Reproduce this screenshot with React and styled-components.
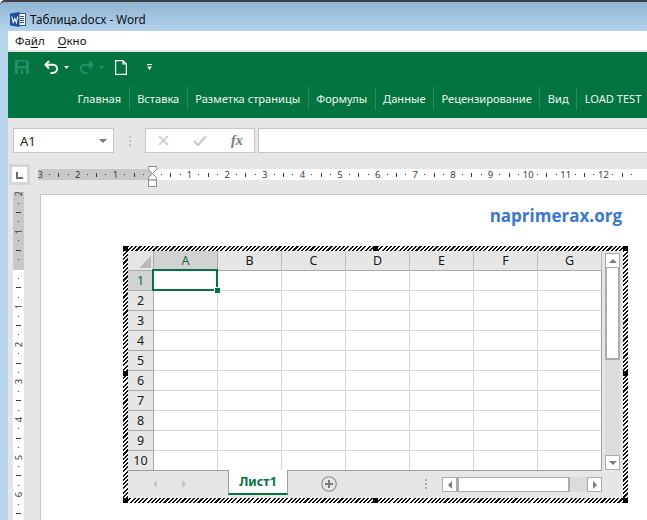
import React from 'react';
import styled, { createGlobalStyle } from 'styled-components';

const GREEN = '#03733f';
const FADED = '#249068';
const SEGOE = '"Noto Sans", "Open Sans", "Liberation Sans", sans-serif';

const GlobalStyle = createGlobalStyle`
    html, body {
        margin: 0;
        padding: 0;
        background: #ffffff;
    }
    body {
        font-family: ${SEGOE};
        overflow: hidden;
    }
`;

// window frame ********************************
const Window = styled.div`
    width: 647px;
    height: 520px;
    overflow: hidden;
    display: flex;
    flex-direction: column;
    border-top: 2px solid #3a3f44;
    border-top-left-radius: 5px;
    box-sizing: border-box;
    background: linear-gradient(to bottom, #8fb3d1 0, #b5d5ef 30px);
`;

const TitleBar = styled.div`
    height: 29px;
    flex: none;
    box-sizing: border-box;
    display: flex;
    align-items: center;
    padding: 5px 0 0 10px;
    gap: 4px;
    font-size: 11.7px;
    color: #0b0f14;
`;

const Body = styled.div`
    flex: 1;
    min-height: 0;
    margin-left: 8px;
    display: flex;
    flex-direction: column;
    background: #e6e6e6;
`;

const MenuBar = styled.div`
    height: 19px;
    flex: none;
    display: flex;
    align-items: center;
    padding-left: 7px;
    gap: 13px;
    background: #ffffff;
    border-bottom: 2px solid #e4e4e4;
    font-size: 11.5px;
    color: #101010;
`;

const MenuKey = styled.span`
    text-decoration: underline;
    text-underline-offset: 2px;
`;

// ribbon **************************************
const Ribbon = styled.div`
    height: 66px;
    flex: none;
    background: ${GREEN};
    display: flex;
    flex-direction: column;
`;

const QuickAccess = styled.div`
    height: 30px;
    flex: none;
    display: flex;
    align-items: center;
    padding-left: 7px;
`;

const QuickIcon = styled.svg`
    display: block;
    flex: none;
    margin-right: ${(props) => props.$gap || 0}px;
`;

const Tabs = styled.div`
    height: 23px;
    margin-top: 5px;
    display: flex;
    align-items: stretch;
    padding-left: 62px;
`;

const Tab = styled.div`
    display: flex;
    align-items: center;
    padding: 0 7.5px;
    font-size: 11.1px;
    color: #eef6f1;
    white-space: nowrap;
    border-left: ${(props) => props.$first ? 'none' : '1px solid #2a8a5e'};
`;

// formula bar *********************************
const FormulaBar = styled.div`
    height: 46px;
    flex: none;
    display: flex;
    align-items: flex-start;
    padding: 10px 0 0 5px;
    box-sizing: border-box;
`;

const NameBox = styled.div`
    width: 101px;
    height: 25px;
    flex: none;
    box-sizing: border-box;
    background: #ffffff;
    border: 1px solid #c6c6c6;
    display: flex;
    align-items: center;
    justify-content: space-between;
    padding: 0 6px;
    font-size: 13px;
    color: #1d1d1d;
`;

const Caret = styled.span`
    width: 0;
    height: 0;
    border-left: 4px solid transparent;
    border-right: 4px solid transparent;
    border-top: 4px solid #7a7a7a;
`;

const Grip = styled.div`
    width: 31px;
    height: 25px;
    flex: none;
    display: flex;
    flex-direction: column;
    align-items: center;
    justify-content: center;
    gap: 2px;
`;

const GripDot = styled.i`
    display: block;
    width: 2px;
    height: 2px;
    background: ${(props) => props.$color || '#c4c4c4'};
`;

const FormulaButtons = styled.div`
    width: 110px;
    height: 25px;
    flex: none;
    box-sizing: border-box;
    background: #ffffff;
    border: 1px solid #c6c6c6;
    display: flex;
    align-items: center;
    padding-left: 12px;
    gap: 24px;
`;

const Fx = styled.span`
    font-family: "Liberation Serif", serif;
    font-style: italic;
    font-weight: 700;
    font-size: 14px;
    color: #7a7a7a;
`;

const FormulaInput = styled.div`
    flex: 1;
    height: 25px;
    margin-left: 3px;
    box-sizing: border-box;
    background: #ffffff;
    border: 1px solid #c6c6c6;
    border-right: none;
`;

// rulers **************************************
const RulerRow = styled.div`
    height: 28px;
    flex: none;
    display: flex;
    align-items: flex-start;
`;

const RulerCorner = styled.div`
    width: 21px;
    height: 21px;
    flex: none;
    margin-left: 1px;
    box-sizing: border-box;
    background: #ffffff;
    border: 3px solid #d6d6d6;
    display: flex;
    align-items: center;
    justify-content: center;
`;

const CornerMark = styled.i`
    display: block;
    width: 5px;
    height: 5px;
    margin-top: 1px;
    border-left: 2px solid #6b6b6b;
    border-bottom: 2px solid #6b6b6b;
`;

const HRuler = styled.div`
    flex: 1;
    min-width: 0;
    height: 11px;
    margin: 5px 0 0 8px;
    display: flex;
    position: relative;
`;

const HSegment = styled.div`
    display: flex;
    flex: ${(props) => props.$dark ? 'none' : 1};
    min-width: 0;
    width: ${(props) => props.$dark ? '115px' : 'auto'};
    justify-content: ${(props) => props.$dark ? 'flex-end' : 'flex-start'};
    padding: ${(props) => props.$dark ? '0 4.7px 0 0' : '0 0 0 3.6px'};
    box-sizing: border-box;
    overflow: hidden;
    background: ${(props) => props.$dark ? '#c8c8c8' : '#ffffff'};
`;

const HCell = styled.div`
    flex: none;
    width: 9.42px;
    height: 11px;
    display: flex;
    align-items: center;
    justify-content: center;
    font-size: 9.5px;
    line-height: 11px;
    color: #3c3c3c;
`;

const VRuler = styled.div`
    width: 11px;
    margin-left: 5px;
    flex: none;
    display: flex;
    flex-direction: column;
    overflow: hidden;
`;

const VSegment = styled.div`
    display: flex;
    flex-direction: column;
    flex: ${(props) => props.$dark ? 'none' : 1};
    min-height: 0;
    height: ${(props) => props.$dark ? '78px' : 'auto'};
    justify-content: ${(props) => props.$dark ? 'flex-end' : 'flex-start'};
    padding: ${(props) => props.$dark ? '0 0 5.7px 0' : '3.7px 0 0 0'};
    box-sizing: border-box;
    overflow: hidden;
    background: ${(props) => props.$dark ? '#c8c8c8' : '#ffffff'};
`;

const VCell = styled.div`
    flex: none;
    height: 9.42px;
    width: 11px;
    display: flex;
    align-items: center;
    justify-content: center;
    font-size: 9.5px;
    line-height: 9px;
    color: #3c3c3c;
`;

const VNumber = styled.span`
    display: block;
    transform: rotate(-90deg);
`;

const Dot = styled.i`
    display: block;
    width: 1px;
    height: 1px;
    background: #3c3c3c;
`;

const HTick = styled.i`
    display: block;
    width: 1px;
    height: 4px;
    background: #3c3c3c;
`;

const VTick = styled.i`
    display: block;
    width: 5px;
    height: 1px;
    background: #3c3c3c;
`;

// the indent marker sits over the ruler
const IndentMarker = styled.svg`
    position: absolute;
    left: 110px;
    top: -3px;
`;

// page ****************************************
const Workspace = styled.div`
    flex: 1;
    min-height: 0;
    display: flex;
`;

const Page = styled.div`
    flex: 1;
    margin: 2px 0 0 16px;
    background: #ffffff;
    border-left: 1px solid #c6c6c6;
    border-top: 1px solid #c6c6c6;
    display: flex;
    flex-direction: column;
    align-items: flex-start;
`;

const Brand = styled.div`
    align-self: flex-end;
    height: 51px;
    flex: none;
    box-sizing: border-box;
    padding: 9px 25px 0 0;
    font-family: "Open Sans", "Noto Sans", sans-serif;
    font-weight: 700;
    font-size: 17px;
    line-height: 24px;
    color: #3a78d4;
`;

const Hatch = styled.div`
    position: relative;
    margin-left: 82px;
    padding: 5px;
    flex: none;
    background: repeating-linear-gradient(135deg, #111111 0 1.5px, #ffffff 1.5px 3px);
`;

const Handle = styled.i`
    position: absolute;
    width: 5px;
    height: 5px;
    background: #000000;
    left: ${(props) => props.$x}px;
    top: ${(props) => props.$y}px;
`;

const Sheet = styled.div`
    width: 495px;
    height: 247px;
    background: #e6e6e6;
    display: flex;
    flex-direction: column;
`;

const SheetMain = styled.div`
    height: 219px;
    flex: none;
    display: flex;
`;

const Grid = styled.div`
    width: 474px;
    height: 219px;
    flex: none;
    display: grid;
    grid-template-columns: 26px repeat(7, 64px);
    grid-template-rows: repeat(11, 20px);
    position: relative;
    overflow: hidden;
`;

const SelectAll = styled.div`
    background: #e6e6e6;
    border-right: 1px solid #ababab;
    border-bottom: 1px solid #ababab;
    box-sizing: border-box;
    display: flex;
    align-items: flex-end;
    justify-content: flex-end;
    padding: 0 2px 2px 0;
`;

const SelectTriangle = styled.i`
    display: block;
    width: 0;
    height: 0;
    border-left: 12px solid transparent;
    border-bottom: 12px solid #b9b9b9;
`;

const ColHeader = styled.div`
    box-sizing: border-box;
    background: ${(props) => props.$active ? '#d2d2d2' : '#e6e6e6'};
    border-right: 1px solid ${(props) => props.$active ? '#ababab' : '#bdbdbd'};
    border-bottom: 1px solid #ababab;
    display: flex;
    align-items: center;
    justify-content: center;
    font-size: 12.5px;
    color: ${(props) => props.$active ? '#0d6b46' : '#1a1a1a'};
`;

const RowHeader = styled.div`
    box-sizing: border-box;
    background: ${(props) => props.$active ? '#d2d2d2' : '#e6e6e6'};
    border-right: 1px solid #ababab;
    border-bottom: 1px solid #ababab;
    display: flex;
    align-items: center;
    justify-content: center;
    font-size: 12.5px;
    color: ${(props) => props.$active ? '#0d6b46' : '#1a1a1a'};
`;

const Cell = styled.div`
    box-sizing: border-box;
    background: #ffffff;
    border-right: 1px solid ${(props) => props.$last ? '#9e9e9e' : '#d4d4d4'};
    border-bottom: 1px solid #d4d4d4;
    position: relative;
`;

const Selection = styled.div`
    position: absolute;
    left: -2px;
    top: -2px;
    width: 66px;
    height: 22px;
    box-sizing: border-box;
    border: 2px solid ${GREEN};
    z-index: 2;
`;

const SelectionHandle = styled.i`
    position: absolute;
    right: -4px;
    bottom: -4px;
    width: 5px;
    height: 5px;
    background: ${GREEN};
    border-left: 1px solid #ffffff;
    border-top: 1px solid #ffffff;
`;

const VScroll = styled.div`
    width: 15px;
    margin: 2px 0 0 3px;
    flex: none;
    display: flex;
    flex-direction: column;
    box-sizing: border-box;
    background: #dcdcdc;
`;

const ScrollButton = styled.div`
    flex: none;
    box-sizing: border-box;
    width: 15px;
    height: 15px;
    background: #ffffff;
    border: 1px solid #ababab;
    display: flex;
    align-items: center;
    justify-content: center;
`;

const VThumb = styled.div`
    height: 92px;
    flex: none;
    box-sizing: border-box;
    background: #ffffff;
    border: 2px solid #ababab;
    border-top: none;
`;

const ScrollTrack = styled.div`
    flex: 1;
`;

const Arrow = styled.i`
    display: block;
    width: 0;
    height: 0;
    border: 4px solid transparent;
    ${(props) => props.$dir === 'up' && `border-bottom-color: ${props.$color || '#7b7b7b'}; border-top: none;`}
    ${(props) => props.$dir === 'down' && `border-top-color: ${props.$color || '#7b7b7b'}; border-bottom: none;`}
    ${(props) => props.$dir === 'left' && `border-right-color: ${props.$color || '#7b7b7b'}; border-left: none;`}
    ${(props) => props.$dir === 'right' && `border-left-color: ${props.$color || '#7b7b7b'}; border-right: none;`}
`;

const TabBar = styled.div`
    flex: 1;
    display: flex;
    align-items: flex-start;
    border-top: 1px solid #9e9e9e;
    width: 474px;
`;

const TabNav = styled.div`
    width: 100px;
    height: 26px;
    flex: none;
    display: flex;
    align-items: center;
    padding-left: 25px;
    gap: 25px;
    box-sizing: border-box;
`;

const SheetTab = styled.div`
    width: 60px;
    height: 25px;
    margin-top: -1px;
    flex: none;
    box-sizing: border-box;
    background: #ffffff;
    border-left: 1px solid #9e9e9e;
    border-right: 1px solid #9e9e9e;
    border-bottom: 2px solid ${GREEN};
    display: flex;
    align-items: center;
    justify-content: center;
    font-weight: 700;
    font-size: 12.5px;
    color: ${GREEN};
`;

const AddSheet = styled.div`
    width: 16px;
    height: 16px;
    margin: 5px 0 0 33px;
    flex: none;
`;

const TabGrip = styled.div`
    margin: 8px 0 0 88px;
    display: flex;
    flex-direction: column;
    gap: 2px;
    flex: none;
`;

const HScroll = styled.div`
    width: 160px;
    height: 15px;
    margin: 6px 0 0 15px;
    flex: none;
    display: flex;
    background: #dcdcdc;
`;

const HThumb = styled.div`
    width: 113px;
    flex: none;
    box-sizing: border-box;
    background: #ffffff;
    border: 1px solid #ababab;
    border-left: 2px solid #ababab;
    border-right: 2px solid #ababab;
`;

// helpers *************************************
const COLS = ['A', 'B', 'C', 'D', 'E', 'F', 'G'];
const ROWS = [1, 2, 3, 4, 5, 6, 7, 8, 9, 10];
const TABS = ['Главная', 'Вставка', 'Разметка страницы', 'Формулы', 'Данные', 'Рецензирование', 'Вид', 'LOAD TEST'];
const HANDLES = [[0, 0], [250, 0], [500, 0], [0, 125], [500, 125], [0, 252], [250, 252], [500, 252]];

const tickFor = (i) => {
    const n = Math.abs(i);
    if (n % 4 === 0) return n / 4;
    return n % 2 === 0 ? 'tick' : 'dot';
};

const HRulerCell = ({ i }) => {
    const t = tickFor(i);
    return <HCell>{t === 'tick' ? <HTick /> : t === 'dot' ? <Dot /> : t}</HCell>;
};

const VRulerCell = ({ i }) => {
    const t = tickFor(i);
    return <VCell>{t === 'tick' ? <VTick /> : t === 'dot' ? <Dot /> : <VNumber>{t}</VNumber>}</VCell>;
};

const range = (from, to) => {
    const out = [];
    for (let i = from; i <= to; i++) out.push(i);
    return out;
};

const WordLogo = () => (
    <svg width="16" height="15" viewBox="0 0 16 15" style={{ display: 'block' }}>
        <rect x="6.500" y="1.500" width="9" height="12" fill="#ffffff" stroke="#2b579a" />
        <path d="M10 4.500h4M10 6.500h4M10 8.500h4M10 10.500h4" stroke="#2b579a" />
        <path d="M0 1.500 L9.500 0 V15 L0 13.500z" fill="#1f4e9a" />
        <path d="M1.800 4.500 L3.200 10.500 L4.800 6.500 L6.300 10.500 L7.700 4.500" fill="none" stroke="#ffffff" strokeWidth="1.100" />
    </svg>
);

const App = () => {
    return (
        <>
            <GlobalStyle />
            <Window>
                <TitleBar>
                    <WordLogo />
                    <span>Таблица.docx - Word</span>
                </TitleBar>
                <Body>
                    <MenuBar>
                        <span>Фа<MenuKey>й</MenuKey>л</span>
                        <span><MenuKey>О</MenuKey>кно</span>
                    </MenuBar>
                    <Ribbon>
                        <QuickAccess>
                            <QuickIcon width="14" height="14" viewBox="0 0 14 14" $gap={15}>
                                <path d="M0 0h12l2 2v12H0z" fill={FADED} />
                                <rect x="3" y="1.500" width="8" height="4.500" fill={GREEN} />
                                <rect x="3" y="8.500" width="8" height="5.500" fill={GREEN} />
                                <rect x="6" y="10" width="2" height="4" fill={FADED} />
                            </QuickIcon>
                            <QuickIcon width="14" height="14" viewBox="0 0 14 14" $gap={6}>
                                <path d="M5 1 L1.500 4.800 L5 8.500 M2 4.800 H8.500 C11.500 4.800 13 6.800 13 9 C13 11.300 11 13 8.500 13 H6.500" fill="none" stroke="#ffffff" strokeWidth="2" />
                            </QuickIcon>
                            <QuickIcon width="5" height="3" viewBox="0 0 5 3" $gap={10}>
                                <path d="M0 0h5L2.500 3z" fill="#ffffff" />
                            </QuickIcon>
                            <QuickIcon width="15" height="14" viewBox="0 0 15 14" $gap={5}>
                                <path d="M10 1 L13.500 4.800 L10 8.500 M13 4.800 H6.500 C3.500 4.800 2 6.800 2 9 C2 11.300 4 13 6.500 13 H8.500" fill="none" stroke={FADED} strokeWidth="2" />
                            </QuickIcon>
                            <QuickIcon width="5" height="3" viewBox="0 0 5 3" $gap={11}>
                                <path d="M0 0h5L2.500 3z" fill={FADED} />
                            </QuickIcon>
                            <QuickIcon width="12" height="15" viewBox="0 0 12 15" $gap={20}>
                                <path d="M.6 .6h7.400L11.400 4v10.400H.6z M8 .6V4h3.400" fill="none" stroke="#ffffff" strokeWidth="1.200" />
                            </QuickIcon>
                            <QuickIcon width="5" height="6" viewBox="0 0 5 6">
                                <path d="M0 0h5v1H0z M0 2.500h5L2.500 6z" fill="#ffffff" />
                            </QuickIcon>
                        </QuickAccess>
                        <Tabs>
                            {TABS.map((t, i) => <Tab key={t} $first={i === 0}>{t}</Tab>)}
                        </Tabs>
                    </Ribbon>
                    <FormulaBar>
                        <NameBox>A1<Caret /></NameBox>
                        <Grip><GripDot /><GripDot /><GripDot /></Grip>
                        <FormulaButtons>
                            <svg width="11" height="11" viewBox="0 0 11 11"><path d="M1 1l9 9M10 1l-9 9" stroke="#c8c8c8" strokeWidth="1.600" /></svg>
                            <svg width="14" height="11" viewBox="0 0 14 11"><path d="M1 6l4 4 8-9" fill="none" stroke="#c8c8c8" strokeWidth="2.200" /></svg>
                            <Fx>fx</Fx>
                        </FormulaButtons>
                        <FormulaInput />
                    </FormulaBar>
                    <RulerRow>
                        <RulerCorner><CornerMark /></RulerCorner>
                        <HRuler>
                            <HSegment $dark>
                                {range(-12, -1).map((i) => <HRulerCell key={i} i={i} />)}
                            </HSegment>
                            <HSegment>
                                {range(1, 51).map((i) => <HRulerCell key={i} i={i} />)}
                            </HSegment>
                            <IndentMarker width="9" height="21" viewBox="0 0 9 21">
                                <path d="M.5 .5h8v3L4.500 7.500 .5 3.500z M4.500 7.500l4 4v2.500h-8v-2.500z" fill="#ffffff" stroke="#8c8c8c" />
                                <rect x=".5" y="14" width="8" height="6.500" fill="#ffffff" stroke="#8c8c8c" />
                            </IndentMarker>
                        </HRuler>
                    </RulerRow>
                    <Workspace>
                        <VRuler>
                            <VSegment $dark>
                                {range(-8, -1).map((i) => <VRulerCell key={i} i={i} />)}
                            </VSegment>
                            <VSegment>
                                {range(1, 27).map((i) => <VRulerCell key={i} i={i} />)}
                            </VSegment>
                        </VRuler>
                        <Page>
                            <Brand>naprimerax.org</Brand>
                            <Hatch>
                                {HANDLES.map(([x, y]) => <Handle key={`${x}-${y}`} $x={x} $y={y} />)}
                                <Sheet>
                                    <SheetMain>
                                        <Grid>
                                            <SelectAll><SelectTriangle /></SelectAll>
                                            {COLS.map((c, i) => <ColHeader key={c} $active={i === 0}>{c}</ColHeader>)}
                                            {ROWS.map((r) => (
                                                <React.Fragment key={r}>
                                                    <RowHeader $active={r === 1}>{r}</RowHeader>
                                                    {COLS.map((c) => (
                                                        <Cell key={c} $last={c === 'G'}>
                                                            {r === 1 && c === 'A' && <Selection><SelectionHandle /></Selection>}
                                                        </Cell>
                                                    ))}
                                                </React.Fragment>
                                            ))}
                                        </Grid>
                                        <VScroll>
                                            <ScrollButton><Arrow $dir="up" /></ScrollButton>
                                            <VThumb />
                                            <ScrollTrack />
                                            <ScrollButton><Arrow $dir="down" /></ScrollButton>
                                        </VScroll>
                                    </SheetMain>
                                    <TabBar>
                                        <TabNav>
                                            <Arrow $dir="left" $color="#c4c4c4" />
                                            <Arrow $dir="right" $color="#c4c4c4" />
                                        </TabNav>
                                        <SheetTab>Лист1</SheetTab>
                                        <AddSheet>
                                            <svg width="16" height="16" viewBox="0 0 16 16" style={{ display: 'block' }}>
                                                <circle cx="8" cy="8" r="7.300" fill="none" stroke="#8c8c8c" strokeWidth="1.100" />
                                                <path d="M8 4v8M4 8h8" stroke="#7b7b7b" strokeWidth="2" />
                                            </svg>
                                        </AddSheet>
                                        <TabGrip>
                                            <GripDot $color="#ababab" /><GripDot $color="#ababab" /><GripDot $color="#ababab" />
                                        </TabGrip>
                                        <HScroll>
                                            <ScrollButton><Arrow $dir="left" /></ScrollButton>
                                            <HThumb />
                                            <ScrollTrack />
                                            <ScrollButton><Arrow $dir="right" /></ScrollButton>
                                        </HScroll>
                                    </TabBar>
                                </Sheet>
                            </Hatch>
                        </Page>
                    </Workspace>
                </Body>
            </Window>
        </>
    );
};

export default App;
